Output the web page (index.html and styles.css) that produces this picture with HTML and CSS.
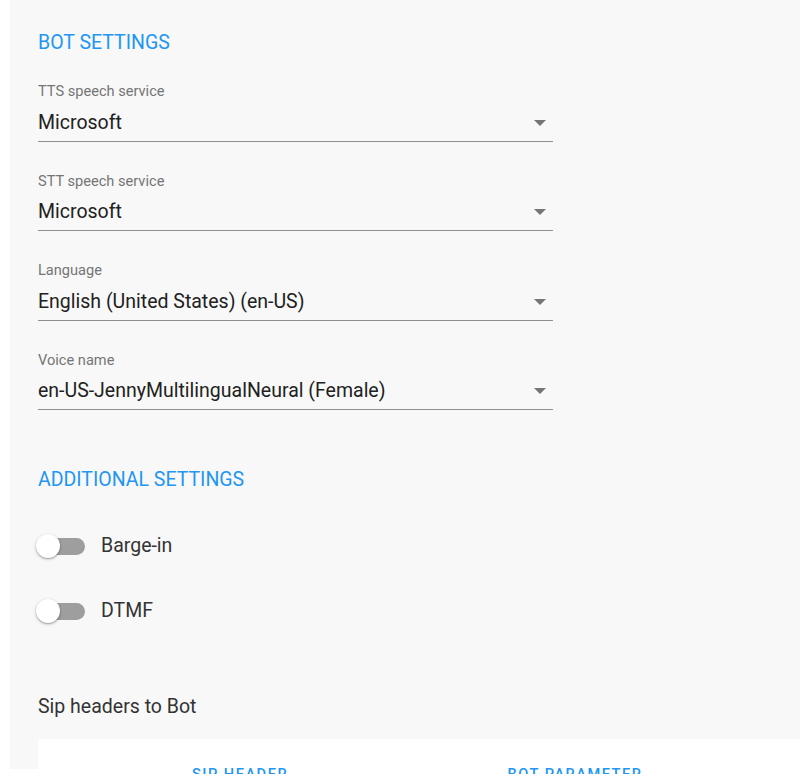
FILE: index.html
```html
<!DOCTYPE html>
<html lang="en">
<head>
<meta charset="utf-8">
<title>Bot settings</title>
<link rel="stylesheet" href="styles.css">
</head>
<body>
<div class="viewport">
  <div class="panel">
    <h2 class="section-title">BOT SETTINGS</h2>

    <div class="field">
      <div class="field-label">TTS speech service</div>
      <div class="select">
        <span class="select-value">Microsoft</span>
        <span class="arrow"></span>
      </div>
    </div>

    <div class="field">
      <div class="field-label">STT speech service</div>
      <div class="select">
        <span class="select-value">Microsoft</span>
        <span class="arrow"></span>
      </div>
    </div>

    <div class="field">
      <div class="field-label">Language</div>
      <div class="select">
        <span class="select-value">English (United States) (en-US)</span>
        <span class="arrow"></span>
      </div>
    </div>

    <div class="field">
      <div class="field-label">Voice name</div>
      <div class="select">
        <span class="select-value">en-US-JennyMultilingualNeural (Female)</span>
        <span class="arrow"></span>
      </div>
    </div>

    <h2 class="section-title section-title--additional">ADDITIONAL SETTINGS</h2>

    <div class="toggle-row toggle-row--first">
      <span class="switch"><span class="track"></span><span class="thumb"></span></span>
      <span class="toggle-label">Barge-in</span>
    </div>
    <div class="toggle-row">
      <span class="switch"><span class="track"></span><span class="thumb"></span></span>
      <span class="toggle-label">DTMF</span>
    </div>

    <div class="sip-title">Sip headers to Bot</div>

    <div class="card">
      <div class="table-head">
        <div class="th">SIP HEADER</div>
        <div class="th">BOT PARAMETER</div>
        <div class="th"></div>
      </div>
    </div>
  </div>
</div>
</body>
</html>
```

FILE: styles.css
```css
* { box-sizing: border-box; }

html, body {
  margin: 0;
  padding: 0;
  background: #ffffff;
  font-family: Roboto, "Liberation Sans", Arial, sans-serif;
}

.viewport {
  height: 774px;
  overflow: hidden;
}

.panel {
  margin-left: 10px;
  height: 769px;
  background: #f8f8f8;
  padding: 31px 0 0 28px;
  display: flex;
  flex-direction: column;
}

.section-title {
  margin: 0;
  font-size: 19.5px;
  line-height: 24px;
  font-weight: 400;
  color: #2196f3;
}

.section-title--additional {
  margin-top: 58px;
}

.field {
  width: 515px;
  margin-top: 27px;
}

.field + .field {
  margin-top: 30px;
}

.field-label {
  font-size: 14.6px;
  line-height: 18px;
  color: #757575;
}

.select {
  margin-top: 10.5px;
  display: flex;
  align-items: center;
  justify-content: space-between;
  padding-bottom: 6px;
  border-bottom: 1px solid #8f8f8f;
}

.select-value {
  font-size: 19.5px;
  line-height: 24px;
  color: #212121;
}

.arrow {
  width: 0;
  height: 0;
  margin-right: 7px;
  border-left: 6px solid transparent;
  border-right: 6px solid transparent;
  border-top: 6px solid #757575;
}

.toggle-row {
  display: flex;
  align-items: center;
  height: 26px;
  margin-top: 39px;
}

.toggle-row--first {
  margin-top: 41px;
}

.switch {
  position: relative;
  width: 47px;
  height: 26px;
  flex: none;
}

.track {
  position: absolute;
  left: 3px;
  top: 4.5px;
  width: 44px;
  height: 17px;
  border-radius: 9px;
  background: #9e9e9e;
}

.thumb {
  position: absolute;
  left: -2px;
  top: 1px;
  width: 24px;
  height: 24px;
  border-radius: 50%;
  background: #ffffff;
  box-shadow: 0 1px 3px rgba(0, 0, 0, 0.3), 0 1px 1px rgba(0, 0, 0, 0.14);
}

.toggle-label {
  margin-left: 16px;
  font-size: 19.5px;
  line-height: 24px;
  color: #333333;
}

.sip-title {
  margin-top: 71px;
  font-size: 19.5px;
  line-height: 24px;
  color: #333333;
}

.card {
  margin-top: 20px;
  background: #ffffff;
  flex: none;
  height: 200px;
  margin-right: -40px;
  padding-top: 25.5px;
}

.table-head {
  display: grid;
  grid-template-columns: 404px 266px 1fr;
}

.th {
  text-align: center;
  font-size: 14.6px;
  line-height: 18px;
  font-weight: 500;
  letter-spacing: 1.5px;
  color: #2196f3;
}
```
